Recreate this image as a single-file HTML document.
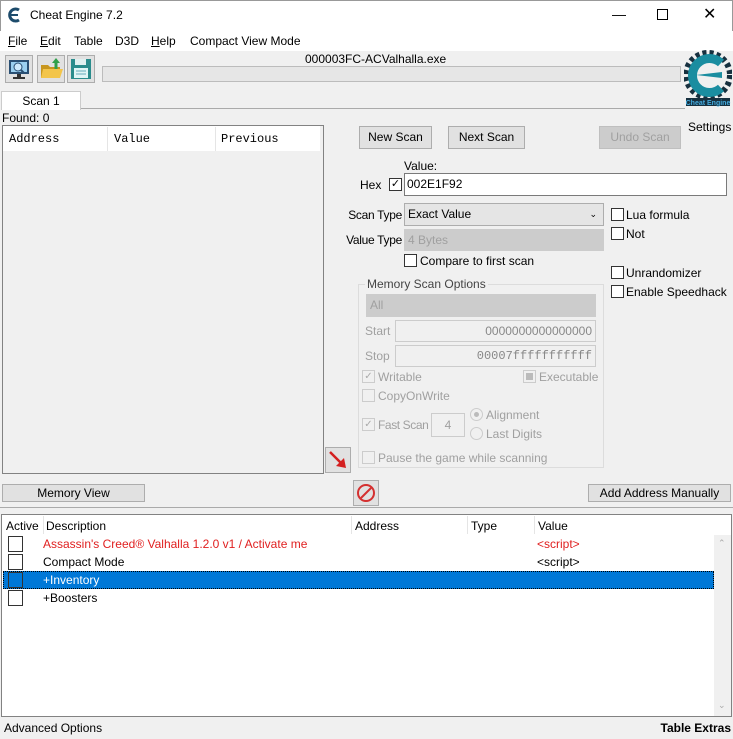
<!DOCTYPE html>
<html><head><meta charset="utf-8"><style>
*{box-sizing:border-box;margin:0;padding:0}
body{width:733px;height:739px;background:#f0f0f0;font-family:"Liberation Sans",sans-serif;font-size:12px;color:#000;position:relative;overflow:hidden}
.a{position:absolute;white-space:nowrap}
.btn{position:absolute;background:#e1e1e1;border:1px solid #adadad;text-align:center;line-height:21px}
.cb{position:absolute;width:13px;height:13px;border:1px solid #333;background:#fff}
.cbd{border-color:#ccc}
.dis{color:#a0a0a0}
.inp{position:absolute;background:#fff;border:1px solid #7a7a7a}
.dd{position:absolute;background:#e5e5e5;border:1px solid #adadad;line-height:20px;padding-left:3px}
.mono{font-family:"Liberation Mono",monospace}
.r{text-align:right}
</style></head><body>
<div class="a" style="left:0;top:0;width:733px;height:31px;background:#fff;border:1px solid #999;border-bottom:none"></div>
<svg class="a" style="left:7px;top:7px" width="16" height="16" viewBox="0 0 16 16"><path d="M12 3 A6 6 0 1 0 12 13" stroke="#1d4b6b" stroke-width="3" fill="none"/><path d="M4 8 H11" stroke="#1d4b6b" stroke-width="2"/></svg>
<div class="a" style="left:30px;top:8px;font-size:12px">Cheat Engine 7.2</div>
<div class="a" style="left:612px;top:6px;font-size:14px">&#8212;</div>
<div class="a" style="left:657px;top:9px;width:11px;height:11px;border:1px solid #000"></div>
<div class="a" style="left:703px;top:4px;font-size:16px">&#10005;</div>
<div class="a" style="left:0;top:31px;width:733px;height:20px;background:#fff"></div>
<div class="a" style="left:8px;top:34px"><u>F</u>ile</div>
<div class="a" style="left:40px;top:34px"><u>E</u>dit</div>
<div class="a" style="left:74px;top:34px">Table</div>
<div class="a" style="left:115px;top:34px">D3D</div>
<div class="a" style="left:151px;top:34px"><u>H</u>elp</div>
<div class="a" style="left:190px;top:34px">Compact View Mode</div>

<div class="a" style="left:5px;top:55px;width:28px;height:28px;border:1px solid #adadad;background:#e1e1e1"></div>
<svg class="a" style="left:8px;top:58px" width="22" height="22"><rect x="1" y="2" width="20" height="14" fill="#2a4f73"/><rect x="3" y="4" width="16" height="10" fill="#9bd0f0"/><circle cx="10" cy="9" r="4" fill="#cfeafc" stroke="#2a4f73"/><line x1="13" y1="12" x2="16" y2="15" stroke="#2a4f73" stroke-width="2"/><rect x="9" y="16" width="4" height="3" fill="#333"/><rect x="5" y="19" width="12" height="2" fill="#333"/></svg>
<div class="a" style="left:37px;top:55px;width:28px;height:28px;border:1px solid #adadad;background:#e1e1e1"></div>
<svg class="a" style="left:40px;top:57px" width="24" height="24"><path d="M1 8h7l2 2h10v11H1z" fill="#c8961e"/><path d="M3 12h20l-3 9H1z" fill="#f3c54a"/><path d="M16 1l4 5h-2.5v6h-3V6H12z" fill="#2fa04b"/></svg>
<div class="a" style="left:67px;top:55px;width:28px;height:28px;border:1px solid #adadad;background:#e1e1e1"></div>
<svg class="a" style="left:70px;top:58px" width="22" height="22"><rect x="1" y="1" width="20" height="20" fill="#2a8c8c"/><rect x="5" y="1" width="11" height="6" fill="#e0f0f0"/><rect x="4" y="10" width="14" height="10" fill="#e0f5f5"/><line x1="6" y1="13" x2="16" y2="13" stroke="#6ab"/><line x1="6" y1="16" x2="16" y2="16" stroke="#6ab"/></svg>
<div class="a" style="left:305px;top:52px">000003FC-ACValhalla.exe</div>
<div class="a" style="left:102px;top:66px;width:579px;height:16px;background:#e6e6e6;border:1px solid #bcbcbc"></div>
<svg class="a" style="left:684px;top:50px" width="48" height="70" viewBox="0 0 48 70"><circle cx="24" cy="25" r="22" fill="none" stroke="#17303f" stroke-width="6" stroke-dasharray="4 3"/><path d="M37 13 A17 17 0 1 0 37 38" stroke="#1a8da0" stroke-width="9" fill="none"/><path d="M12 25 L38 22 L38 28 Z" fill="#1a8da0"/><rect x="2" y="48" width="44" height="8" fill="#17303f"/><text x="24" y="55" font-size="7" fill="#4ad" text-anchor="middle" font-family="Liberation Sans" font-weight="bold">Cheat Engine</text></svg>
<div class="a" style="left:688px;top:120px;font-size:12px">Settings</div>

<div class="a" style="left:1px;top:91px;width:80px;height:19px;background:#fff;border:1px solid #ccc;border-bottom:none;text-align:center;line-height:18px">Scan 1</div>
<div class="a" style="left:81px;top:108px;width:604px;height:1px;background:#aaa"></div>
<div class="a" style="left:2px;top:111px">Found: 0</div>
<div class="a" style="left:2px;top:125px;width:322px;height:349px;background:#f0f0f0;border:1px solid #828282"></div>
<div class="a mono" style="left:3px;top:126px;width:317px;height:25px;background:#fff"></div>
<div class="a mono" style="left:9px;top:132px">Address</div>
<div class="a mono" style="left:114px;top:132px">Value</div>
<div class="a mono" style="left:221px;top:132px">Previous</div>
<div class="a" style="left:107px;top:127px;width:1px;height:24px;background:#e5e5e5"></div>
<div class="a" style="left:215px;top:127px;width:1px;height:24px;background:#e5e5e5"></div>

<div class="btn" style="left:359px;top:126px;width:73px;height:23px">New Scan</div>
<div class="btn" style="left:448px;top:126px;width:77px;height:23px">Next Scan</div>
<div class="btn dis" style="left:599px;top:126px;width:82px;height:23px;background:#ccc;border-color:#bfbfbf">Undo Scan</div>

<div class="a" style="left:404px;top:159px">Value:</div>
<div class="a" style="left:360px;top:178px">Hex</div>
<div class="cb" style="left:389px;top:178px;font-size:11px;line-height:11px;text-align:center">&#10003;</div>
<div class="inp" style="left:404px;top:173px;width:323px;height:23px;padding:2px 2px;line-height:17px">002E1F92</div>
<div class="a r" style="left:330px;width:72px;top:208px;letter-spacing:-0.3px">Scan Type</div>
<div class="dd" style="left:404px;top:203px;width:200px;height:23px">Exact Value<span style="position:absolute;right:6px;font-size:9px">&#8964;</span></div>
<div class="a r" style="left:330px;width:72px;top:233px;letter-spacing:-0.3px">Value Type</div>
<div class="dd dis" style="left:404px;top:229px;width:200px;height:22px;background:#ccc;border-color:#ccc">4 Bytes</div>
<div class="cb" style="left:404px;top:254px"></div><div class="a" style="left:420px;top:254px">Compare to first scan</div>
<div class="cb" style="left:611px;top:208px"></div><div class="a" style="left:626px;top:208px">Lua formula</div>
<div class="cb" style="left:611px;top:227px"></div><div class="a" style="left:626px;top:227px">Not</div>
<div class="cb" style="left:611px;top:266px"></div><div class="a" style="left:626px;top:266px">Unrandomizer</div>
<div class="cb" style="left:611px;top:285px"></div><div class="a" style="left:626px;top:285px">Enable Speedhack</div>

<div class="a" style="left:358px;top:284px;width:246px;height:184px;border:1px solid #dcdcdc"></div>
<div class="a" style="left:365px;top:277px;background:#f0f0f0;padding:0 2px;color:#444">Memory Scan Options</div>
<div class="dd dis" style="left:366px;top:294px;width:230px;height:23px;background:#ccc;border-color:#ccc">All</div>
<div class="a dis" style="left:365px;top:324px">Start</div>
<div class="a dis" style="left:395px;top:320px;width:201px;height:22px;border:1px solid #ccc;background:#f0f0f0;text-align:right;padding:3px 3px;color:#888" >0000000000000000</div>
<div class="a dis" style="left:365px;top:349px">Stop</div>
<div class="a dis mono" style="left:395px;top:345px;width:201px;height:22px;border:1px solid #ccc;background:#f0f0f0;text-align:right;padding:3px 3px;color:#888">00007fffffffffff</div>
<div class="cb cbd" style="left:362px;top:370px;font-size:10px;line-height:11px;text-align:center;color:#aaa;background:#f0f0f0">&#10003;</div><div class="a dis" style="left:378px;top:370px">Writable</div>
<div class="cb cbd" style="left:523px;top:370px;background:#f0f0f0"><div style="margin:2px;width:7px;height:7px;background:#bbb"></div></div><div class="a dis" style="left:539px;top:370px">Executable</div>
<div class="cb cbd" style="left:362px;top:389px;background:#f0f0f0"></div><div class="a dis" style="left:378px;top:389px">CopyOnWrite</div>
<div class="cb cbd" style="left:362px;top:418px;font-size:10px;line-height:11px;text-align:center;color:#aaa;background:#f0f0f0">&#10003;</div><div class="a dis" style="left:378px;top:418px;letter-spacing:-0.4px">Fast Scan</div>
<div class="a dis" style="left:431px;top:413px;width:34px;height:24px;border:1px solid #ccc;text-align:center;line-height:22px">4</div>
<div class="a" style="left:470px;top:408px;width:13px;height:13px;border:1px solid #ccc;border-radius:50%"><div style="margin:3px;width:5px;height:5px;border-radius:50%;background:#bbb"></div></div><div class="a dis" style="left:486px;top:408px">Alignment</div>
<div class="a" style="left:470px;top:427px;width:13px;height:13px;border:1px solid #ccc;border-radius:50%"></div><div class="a dis" style="left:486px;top:427px">Last Digits</div>
<div class="cb cbd" style="left:362px;top:451px;background:#f0f0f0"></div><div class="a dis" style="left:378px;top:451px">Pause the game while scanning</div>

<div class="btn" style="left:325px;top:447px;width:26px;height:26px"></div>
<svg class="a" style="left:327px;top:449px" width="22" height="22"><line x1="3" y1="3" x2="16" y2="16" stroke="#d42020" stroke-width="2.5"/><path d="M19 19 L9 17 L17 9 Z" fill="#d42020"/></svg>
<div class="btn" style="left:2px;top:484px;width:143px;height:18px;line-height:16px">Memory View</div>
<div class="btn" style="left:353px;top:480px;width:26px;height:26px"></div>
<svg class="a" style="left:355px;top:482px" width="22" height="22"><circle cx="11" cy="11" r="8" fill="none" stroke="#d43030" stroke-width="2"/><line x1="6" y1="16" x2="16" y2="6" stroke="#d43030" stroke-width="2"/></svg>
<div class="btn" style="left:588px;top:484px;width:143px;height:18px;line-height:16px">Add Address Manually</div>
<div class="a" style="left:0;top:507px;width:733px;height:7px;border-top:1px solid #aaa"></div>

<div class="a" style="left:1px;top:514px;width:731px;height:203px;background:#fff;border:1px solid #828282"></div>
<div class="a" style="left:6px;top:519px">Active</div>
<div class="a" style="left:43px;top:516px;width:1px;height:18px;background:#e5e5e5"></div>
<div class="a" style="left:46px;top:519px">Description</div>
<div class="a" style="left:351px;top:516px;width:1px;height:18px;background:#e5e5e5"></div>
<div class="a" style="left:355px;top:519px">Address</div>
<div class="a" style="left:467px;top:516px;width:1px;height:18px;background:#e5e5e5"></div>
<div class="a" style="left:471px;top:519px">Type</div>
<div class="a" style="left:534px;top:516px;width:1px;height:18px;background:#e5e5e5"></div>
<div class="a" style="left:538px;top:519px">Value</div>
<div class="a" style="left:714px;top:535px;width:17px;height:181px;background:#f0f0f0"></div>
<div class="a" style="left:718px;top:538px;color:#aaa;font-size:9px">&#8963;</div>
<div class="a" style="left:718px;top:700px;color:#aaa;font-size:9px">&#8964;</div>

<div class="a" style="left:3px;top:571px;width:711px;height:18px;background:#0078d7;border:1px dotted #000"></div>
<div class="cb" style="left:8px;top:536px;width:15px;height:16px"></div>
<div class="a" style="left:43px;top:537px;color:#e02020">Assassin's Creed® Valhalla 1.2.0 v1 / Activate me</div>
<div class="a" style="left:537px;top:537px;color:#e02020">&lt;script&gt;</div>
<div class="cb" style="left:8px;top:554px;width:15px;height:16px"></div>
<div class="a" style="left:43px;top:555px">Compact Mode</div>
<div class="a" style="left:537px;top:555px">&lt;script&gt;</div>
<div class="cb" style="left:8px;top:572px;width:15px;height:16px;background:#0078d7"></div>
<div class="a" style="left:43px;top:573px;color:#fff">+Inventory</div>
<div class="cb" style="left:8px;top:590px;width:15px;height:16px"></div>
<div class="a" style="left:43px;top:591px">+Boosters</div>

<div class="a" style="left:4px;top:721px">Advanced Options</div>
<div class="a" style="right:2px;top:721px;font-weight:bold">Table Extras</div>
</body></html>
